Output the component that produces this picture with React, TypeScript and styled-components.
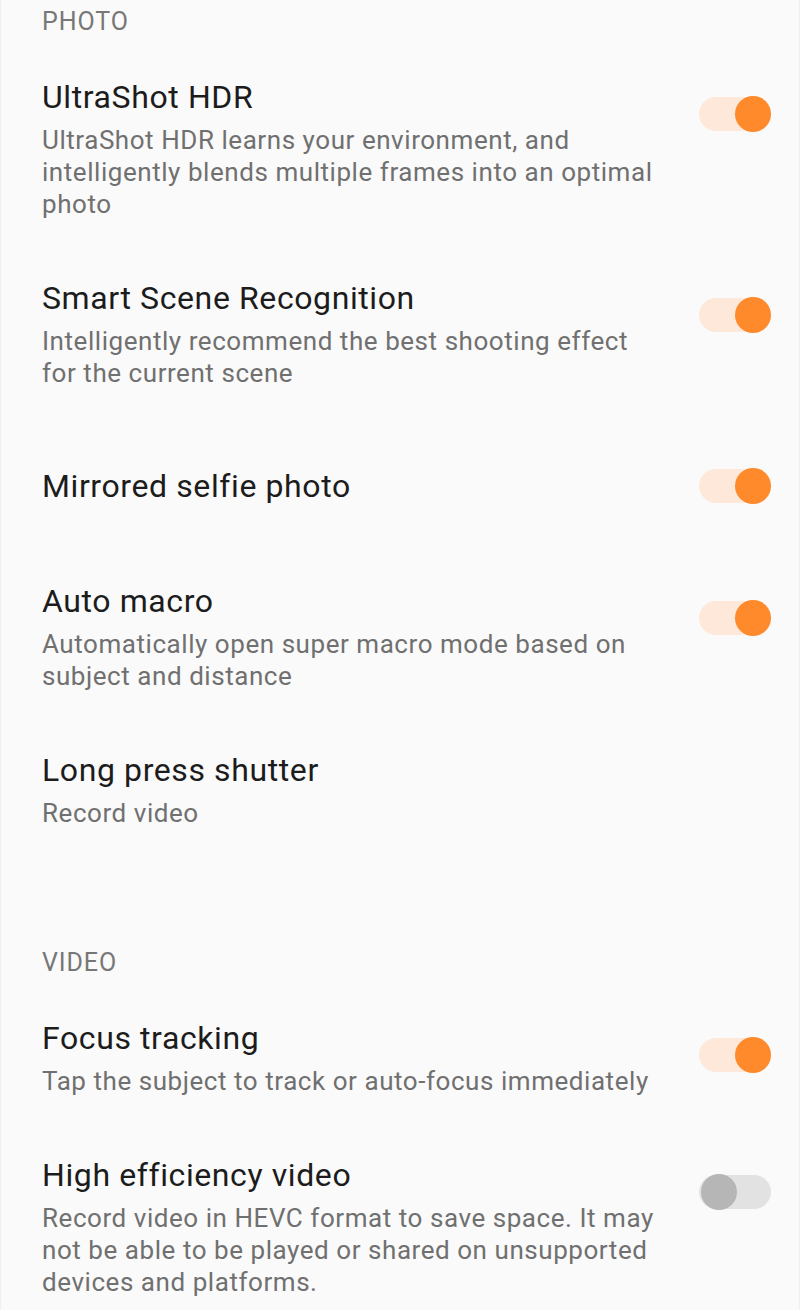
import React from "react";
import styled, { createGlobalStyle } from "styled-components";

const GlobalStyle = createGlobalStyle`
  html, body {
    margin: 0;
    padding: 0;
    background: #fafafa;
  }
  body {
    font-family: Roboto, "Noto Sans", sans-serif;
    -webkit-font-smoothing: antialiased;
  }
`;

const Page = styled.div`
  width: 800px;
  min-height: 1310px;
  box-sizing: border-box;
  background: #fafafa;
  border-left: 1px solid #f0f0f0;
  border-right: 1px solid #f0f0f0;
  padding: 0 28px 0 41px;
  display: flex;
  flex-direction: column;
`;

const Section = styled.section<{ $first?: boolean }>`
  display: flex;
  flex-direction: column;
  margin-top: ${(p) => (p.$first ? "0" : "87px")};
`;

const SectionHeader = styled.div`
  font-size: 25px;
  line-height: 32px;
  color: #777777;
  padding: 6px 0;
  letter-spacing: 0.9px;
`;

const Row = styled.div<{ $single?: boolean }>`
  display: flex;
  align-items: ${(p) => (p.$single ? "center" : "flex-start")};
  justify-content: space-between;
  gap: 24px;
  padding: ${(p) => (p.$single ? "45px 0 35px" : "26px 0 25px")};
`;

const TextCol = styled.div`
  display: flex;
  flex-direction: column;
  flex: 1;
  min-width: 0;
`;

const Title = styled.div`
  font-size: 32px;
  line-height: 54px;
  letter-spacing: 0.6px;
  color: #1c1c1c;
`;

const Desc = styled.div`
  font-size: 26px;
  line-height: 32px;
  letter-spacing: 0.55px;
  color: #707070;
  max-width: 620px;
`;

const SwitchTrack = styled.div<{ $on: boolean; $single?: boolean }>`
  position: relative;
  flex: none;
  width: 72px;
  height: 34px;
  border-radius: 17px;
  margin-top: ${(p) => (p.$single ? "0" : "27px")};
  background: ${(p) => (p.$on ? "#fde8da" : "#e2e2e2")};
`;

const SwitchThumb = styled.div<{ $on: boolean }>`
  position: absolute;
  top: -1px;
  ${(p) => (p.$on ? "right: 0;" : "left: 2px;")}
  width: 36px;
  height: 36px;
  border-radius: 50%;
  background: ${(p) => (p.$on ? "#ff8a2b" : "#b6b6b6")};
`;

type Item = {
  title: string;
  desc?: string;
  toggle?: boolean;
};

const Switch: React.FC<{ on: boolean; single?: boolean }> = ({ on, single }) => (
  <SwitchTrack $on={on} $single={single}>
    <SwitchThumb $on={on} />
  </SwitchTrack>
);

const SettingRow: React.FC<{ item: Item }> = ({ item }) => {
  const single = !item.desc;
  return (
    <Row $single={single}>
      <TextCol>
        <Title>{item.title}</Title>
        {item.desc && <Desc>{item.desc}</Desc>}
      </TextCol>
      {item.toggle !== undefined && <Switch on={item.toggle} single={single} />}
    </Row>
  );
};

const photo: Item[] = [
  {
    title: "UltraShot HDR",
    desc: "UltraShot HDR learns your environment, and intelligently blends multiple frames into an optimal photo",
    toggle: true,
  },
  {
    title: "Smart Scene Recognition",
    desc: "Intelligently recommend the best shooting effect for the current scene",
    toggle: true,
  },
  { title: "Mirrored selfie photo", toggle: true },
  {
    title: "Auto macro",
    desc: "Automatically open super macro mode based on subject and distance",
    toggle: true,
  },
  { title: "Long press shutter", desc: "Record video" },
];

const video: Item[] = [
  {
    title: "Focus tracking",
    desc: "Tap the subject to track or auto-focus immediately",
    toggle: true,
  },
  {
    title: "High efficiency video",
    desc: "Record video in HEVC format to save space. It may not be able to be played or shared on unsupported devices and platforms.",
    toggle: false,
  },
];

export default function App() {
  return (
    <>
      <GlobalStyle />
      <Page>
        <Section $first>
          <SectionHeader>PHOTO</SectionHeader>
          {photo.map((it) => (
            <SettingRow key={it.title} item={it} />
          ))}
        </Section>
        <Section>
          <SectionHeader>VIDEO</SectionHeader>
          {video.map((it) => (
            <SettingRow key={it.title} item={it} />
          ))}
        </Section>
      </Page>
    </>
  );
}
